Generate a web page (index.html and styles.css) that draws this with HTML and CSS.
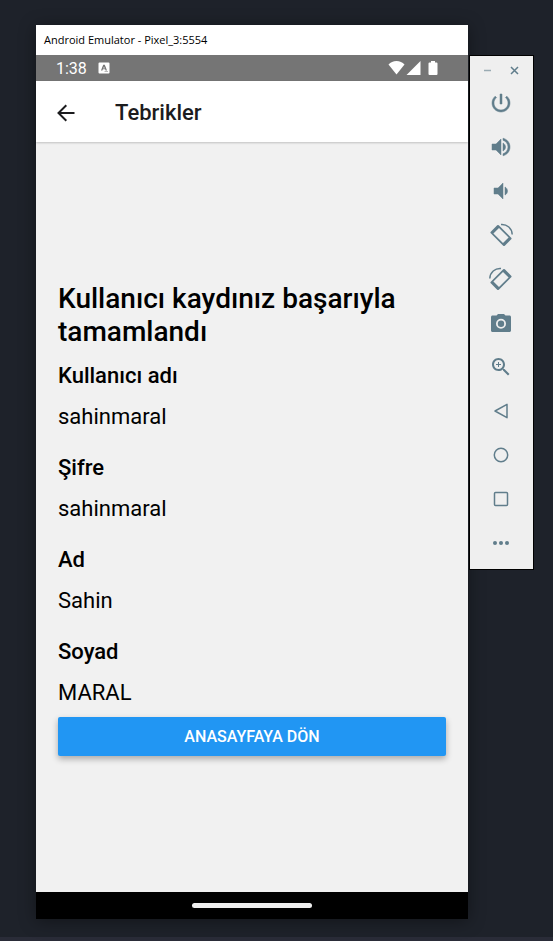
FILE: index.html
```html
<!DOCTYPE html>
<html lang="tr">
<head>
<meta charset="utf-8">
<meta name="viewport" content="width=device-width, initial-scale=1">
<title>Android Emulator - Pixel_3:5554</title>
<link rel="stylesheet" href="styles.css">
</head>
<body>
<div class="desktop">
  <section class="window">
    <div class="window-title">Android Emulator - Pixel_3:5554</div>
    <div class="status-bar">
      <span>1:38</span>
      <svg class="status-badge" width="12" height="12" viewBox="0 0 12 12" aria-hidden="true"><path fill="#fff" fill-rule="evenodd" d="M1.500 0.500h9a1 1 0 0 1 1 1v9a1 1 0 0 1-1 1h-9a1 1 0 0 1-1-1v-9a1 1 0 0 1 1-1zM5.200 2.800L3 8.500h1.400l.4-1.200h2.400l.4 1.200H9L6.800 2.800zM6 4.400l.7 2H5.300zM6.500 9.500v.6H10v-.6z"/></svg>
      <span class="status-icons">
        <svg width="17" height="16" viewBox="0 0 17 16" aria-hidden="true"><path fill="#fff" d="M8.500 14.500L.5 4.500C2.500 2.300 5.300 1 8.500 1s6 1.300 8 3.500z"/></svg>
        <svg width="15" height="16" viewBox="0 0 15 16" aria-hidden="true"><path fill="#fff" d="M14.500 1v14H.5z"/></svg>
        <svg class="battery" width="10" height="16" viewBox="0 0 10 16" aria-hidden="true"><path fill="#fff" d="M3 1h4v1.500h1.500a1 1 0 0 1 1 1V14a1 1 0 0 1-1 1h-7a1 1 0 0 1-1-1V3.500a1 1 0 0 1 1-1H3z"/></svg>
      </span>
    </div>
    <header class="app-bar">
      <button class="back" type="button" aria-label="Geri">
        <svg width="18" height="18" viewBox="0 0 18 18" aria-hidden="true"><path d="M17.500 9H2M9.300 1.200L1.500 9l7.800 7.800" fill="none" stroke="#1c1c1e" stroke-width="2"/></svg>
      </button>
      <span class="app-title">Tebrikler</span>
    </header>
    <main class="content">
      <h1>Kullanıcı kaydınız başarıyla tamamlandı</h1>
      <dl class="fields">
        <div><dt>Kullanıcı adı</dt><dd>sahinmaral</dd></div>
        <div><dt>Şifre</dt><dd>sahinmaral</dd></div>
        <div><dt>Ad</dt><dd>Sahin</dd></div>
        <div><dt>Soyad</dt><dd>MARAL</dd></div>
      </dl>
      <button class="primary" type="button">ANASAYFAYA DÖN</button>
    </main>
    <div class="nav-bar"><span class="nav-handle"></span></div>
  </section>

  <aside class="toolbar" aria-label="Emulator">
    <div class="toolbar-head">
      <button type="button" aria-label="Minimize"><svg width="9" height="9" viewBox="0 0 9 9"><path d="M1 4.500h7" stroke="#9aabb3" stroke-width="1.500"/></svg></button>
      <button type="button" aria-label="Close"><svg width="9" height="9" viewBox="0 0 9 9"><path d="M1 1l7 7M8 1L1 8" stroke="#607d8b" stroke-width="1.500"/></svg></button>
    </div>
    <button type="button" aria-label="Power"><svg class="icon heavy" viewBox="0 0 24 24"><path d="M13 3h-2v10h2V3zm4.830 2.170l-1.420 1.420C17.990 7.860 19 9.810 19 12c0 3.870-3.130 7-7 7s-7-3.130-7-7c0-2.190 1.010-4.140 2.580-5.420L6.170 5.170C4.230 6.820 3 9.260 3 12c0 4.970 4.030 9 9 9s9-4.030 9-9c0-2.740-1.230-5.180-3.170-6.830z"/></svg></button>
    <button type="button" aria-label="Volume up"><svg class="icon heavy" viewBox="0 0 24 24"><path d="M3 9v6h4l5 5V4L7 9H3zm13.500 3c0-1.770-1.020-3.290-2.500-4.030v8.050c1.480-.73 2.500-2.250 2.500-4.020zM14 3.230v2.060c2.890.86 5 3.540 5 6.710s-2.110 5.850-5 6.710v2.060c4.010-.91 7-4.490 7-8.770s-2.990-7.860-7-8.770z"/></svg></button>
    <button type="button" aria-label="Volume down"><svg class="icon heavy" viewBox="0 0 24 24"><path d="M18.500 12c0-1.770-1.020-3.290-2.500-4.030v8.050c1.480-.73 2.500-2.250 2.500-4.020zM5 9v6h4l5 5V4L9 9H5z"/></svg></button>
    <button type="button" aria-label="Rotate left"><svg class="icon" viewBox="0 0 24 24"><g id="rotate"><path fill-rule="evenodd" d="M8.200 2.300Q9 1.500 9.800 2.300L22.200 14.700Q23 15.500 22.200 16.300L15.800 22.700Q15 23.500 14.200 22.700L1.800 10.300Q1 9.500 1.800 8.700zM10 4.900L4.400 10.500 14 20.100l5.600-5.600z"/><path d="M12 1.500C18 1 23 5.500 23.200 11.500" fill="none" stroke="#607d8b" stroke-width="1.500"/></g></svg></button>
    <button type="button" aria-label="Rotate right"><svg class="icon" viewBox="0 0 24 24"><use href="#rotate" transform="matrix(-1 0 0 1 24 0)"/></svg></button>
    <button type="button" aria-label="Take screenshot"><svg class="icon" viewBox="0 0 24 24"><path fill-rule="evenodd" d="M9 3L7.500 4.500H3.500C2.700 4.500 2 5.200 2 6v13.500c0 .8.700 1.500 1.500 1.500h17c.8 0 1.500-.7 1.500-1.500V6c0-.8-.7-1.500-1.500-1.500h-4L15 3H9zm3 14.800a5 5 0 1 1 0-10 5 5 0 0 1 0 10z"/><circle cx="12" cy="12.800" r="3.200"/></svg></button>
    <button type="button" aria-label="Zoom"><svg class="icon" viewBox="0 0 24 24"><path d="M15.500 14h-.79l-.28-.27C15.410 12.590 16 11.110 16 9.500 16 5.910 13.090 3 9.500 3S3 5.910 3 9.500 5.910 16 9.500 16c1.610 0 3.090-.59 4.230-1.570l.27.28v.79l5 4.990L20.490 19l-4.990-5zm-6 0C7.010 14 5 11.990 5 9.500S7.010 5 9.500 5 14 7.010 14 9.500 11.990 14 9.500 14zM12 10h-2v2H9v-2H7V9h2V7h1v2h2v1z"/></svg></button>
    <button type="button" aria-label="Back"><svg class="icon line" viewBox="0 0 24 24"><path d="M18 5.300v13.400L6 12z"/></svg></button>
    <button type="button" aria-label="Home"><svg class="icon line" viewBox="0 0 24 24"><circle cx="12" cy="12" r="6.700"/></svg></button>
    <button type="button" aria-label="Overview"><svg class="icon line" viewBox="0 0 24 24"><rect x="5.500" y="5.500" width="13" height="13" rx="1"/></svg></button>
    <button type="button" aria-label="More"><svg class="icon" viewBox="0 0 24 24"><circle cx="6" cy="12" r="2"/><circle cx="12" cy="12" r="2"/><circle cx="18" cy="12" r="2"/></svg></button>
  </aside>
</div>
</body>
</html>
```
FILE: styles.css
```css
* {
  box-sizing: border-box;
}

body {
  margin: 0;
  background: #1e222a;
  color: #000;
  font-family: Roboto, sans-serif;
}

button {
  border: 0;
  padding: 0;
  background: none;
  font: inherit;
  cursor: pointer;
}

svg {
  display: block;
}

.desktop {
  display: flex;
  align-items: flex-start;
  min-height: 100vh;
  padding: 25px 19px 18px 36px;
  border-bottom: 4px solid #2a2c38;
}

.window {
  flex: 1;
  align-self: stretch;
  display: flex;
  flex-direction: column;
  min-width: 0;
  background: #f1f1f1;
  box-shadow: 0 2px 16px rgba(0, 0, 0, 0.4);
}

.window-title {
  padding: 0 8px;
  background: #fff;
  font: 11px/30px "Open Sans", sans-serif;
}

.status-bar {
  display: flex;
  align-items: center;
  height: 26px;
  padding: 0 30px 0 20px;
  background: #757575;
  color: #fff;
  font-size: 16px;
}

.status-badge {
  margin-left: 11px;
}

.status-icons {
  display: flex;
  gap: 1px;
  margin-left: auto;
}

.battery {
  margin-left: 6px;
}

.app-bar {
  display: flex;
  align-items: center;
  gap: 40px;
  height: 61px;
  padding: 2px 21px 0;
  background: #fff;
  box-shadow: 0 1px 2px rgba(0, 0, 0, 0.2);
}

.app-title {
  color: #1c1c1e;
  font-size: 22px;
  font-weight: 500;
}

.content {
  flex: 1;
  display: flex;
  flex-direction: column;
  justify-content: center;
  padding: 4px 22px 0;
}

h1 {
  margin: 0 0 15px;
  font-size: 28px;
  font-weight: 500;
  line-height: 33px;
}

.fields {
  display: grid;
  gap: 25px;
  margin: 0 0 11px;
  font-size: 22px;
  line-height: 26px;
}

dt {
  margin-bottom: 15px;
  font-weight: 500;
}

dd {
  margin: 0;
}

.primary {
  height: 39px;
  border-radius: 2px;
  background: #2196f3;
  box-shadow: 0 3px 6px rgba(0, 0, 0, 0.3);
  color: #fff;
  font-size: 16px;
  font-weight: 500;
}

.nav-bar {
  display: flex;
  align-items: center;
  justify-content: center;
  height: 27px;
  background: #000;
}

.nav-handle {
  width: 120px;
  height: 5px;
  border-radius: 3px;
  background: #eee;
}

.toolbar {
  display: flex;
  flex-direction: column;
  width: 65px;
  margin: 30px 0 0 1px;
  padding: 0 1px 4px 0;
  border: 1px solid #000;
  background: #efefef;
  z-index: 1;
}

.toolbar > button {
  display: grid;
  place-items: center;
  height: 44px;
}

.toolbar-head {
  display: flex;
  justify-content: center;
  gap: 18px;
  height: 25px;
  padding-top: 3px;
}

.icon {
  width: 24px;
  height: 24px;
  fill: #607d8b;
}

.heavy {
  stroke: #607d8b;
  stroke-width: 0.5;
}

.line {
  fill: none;
  stroke: #607d8b;
  stroke-width: 1.5;
  stroke-linejoin: round;
}
```
